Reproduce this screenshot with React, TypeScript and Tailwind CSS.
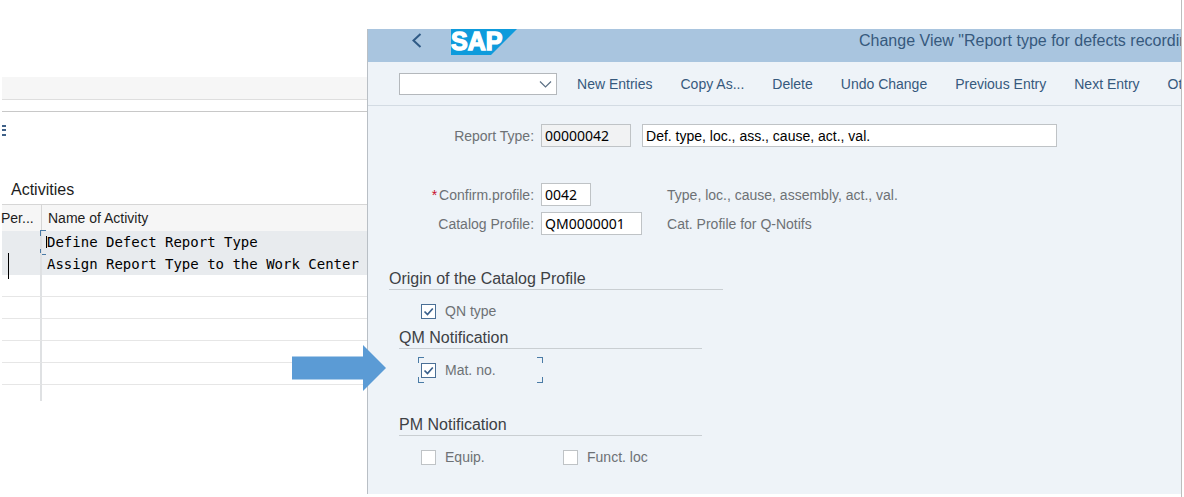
import { useState, type ReactNode } from 'react'

const ACTIONS = [
  'New Entries',
  'Copy As...',
  'Delete',
  'Undo Change',
  'Previous Entry',
  'Next Entry',
  'Other View',
]

const ACTIVITIES = [
  'Define Defect Report Type',
  'Assign Report Type to the Work Center',
]

const EMPTY_ROWS = [1, 2, 3, 4, 5]

const FIELD =
  "h-[23px] shrink-0 border border-[#bfc3c6] px-[3px] text-sm text-black outline-none"
const CODE = "font-['Noto_Sans','Open_Sans',sans-serif]"

function FocusCorners() {
  return (
    <>
      <span className="absolute left-0 top-0 size-[6px] border-l border-t border-[#4a7ba6]" />
      <span className="absolute bottom-0 left-0 size-[6px] border-b border-l border-[#4a7ba6]" />
    </>
  )
}

function SapLogo() {
  return (
    <svg width="66" height="26" viewBox="0 0 66 26" role="img" aria-label="SAP">
      <path d="M0 0H66L40 26H0Z" fill="#0e9bdc" />
      <text
        x="0"
        y="21"
        fill="#fff"
        stroke="#fff"
        strokeWidth="1.4"
        fontFamily="Liberation Sans, sans-serif"
        fontSize="25"
        fontWeight="700"
      >
        SAP
      </text>
    </svg>
  )
}

function Check({ label, initial = false }: { label: string; initial?: boolean }) {
  const [checked, setChecked] = useState(initial)

  return (
    <label className="flex h-[26px] items-center gap-[9px] text-sm text-[#6d7175]">
      <span className="relative size-[15px]">
        <input
          type="checkbox"
          checked={checked}
          onChange={e => setChecked(e.target.checked)}
          className="block size-[15px] appearance-none border border-[#bfc3c6] bg-white checked:border-[#4a6f96]"
        />
        {checked && (
          <svg
            className="pointer-events-none absolute inset-0"
            width="15"
            height="15"
            fill="none"
            stroke="#3a608c"
            strokeWidth="1.7"
          >
            <path d="M3.5 7.5L6.5 10.5L11.8 4.5" />
          </svg>
        )}
      </span>
      {label}
    </label>
  )
}

function SectionTitle({ children, wide = false }: { children: ReactNode; wide?: boolean }) {
  return (
    <h2
      className={`h-[23px] border-b border-[#c9ced2] text-base leading-6 text-[#3d4145] ${
        wide ? 'ml-[21px] w-[334px]' : 'ml-[31px] w-[303px]'
      }`}
    >
      {children}
    </h2>
  )
}

function ActivitiesPane() {
  return (
    <section className="w-[31%] shrink-0 overflow-hidden pl-[2px] pt-[77px]">
      <div className="h-[23px] border-b border-[#dedede] bg-[#f6f6f6]" />
      <div className="h-3 border-b border-[#c8c8c8]" />
      <svg className="mt-3 block" width="4" height="13" fill="#3f6188">
        <path d="M0 1h4v2H0zM0 5h4v2H0zM0 10h4v2H0z" />
      </svg>
      <h2 className="mt-[41px] h-[26px] pl-[9px] text-base leading-6 text-[#1d1d1d]">Activities</h2>
      <table className="w-full table-fixed border-separate border-spacing-0 text-left">
        <colgroup>
          <col className="w-[40px]" />
          <col />
        </colgroup>
        <thead>
          <tr className="h-[27px] bg-[#f6f6f6] text-sm text-[#1d1d1d]">
            <th className="whitespace-nowrap border-r border-t border-[#d6d6d6] p-0 font-normal">
              <span className="-ml-px">Per...</span>
            </th>
            <th className="border-t border-[#d6d6d6] p-0 pl-[6px] font-normal">Name of Activity</th>
          </tr>
        </thead>
        <tbody>
          {ACTIVITIES.map((name, i) => (
            <tr key={name} className="h-[22px] bg-[#e8ebee]">
              <td className="relative border-r-2 border-[#dfe1e3] p-0">
                {i === 1 && <span className="absolute left-[6px] top-0 h-[26px] w-px bg-black" />}
              </td>
              <td className="relative whitespace-nowrap p-0 pl-[5px] font-['DejaVu_Sans_Mono',monospace] text-sm leading-[22px] text-black">
                {i === 0 && (
                  <span className="absolute -left-[2px] -top-px h-[25px] w-[7px]">
                    <FocusCorners />
                    <span className="absolute right-0 top-[6px] h-3 w-px bg-black" />
                  </span>
                )}
                {name}
              </td>
            </tr>
          ))}
          {EMPTY_ROWS.map(n => (
            <tr key={n} className="h-[22px]">
              <td className="border-b border-r-2 border-b-[#e6e6e6] border-r-[#dfe1e3] p-0" />
              <td className="border-b border-[#e6e6e6] p-0" />
            </tr>
          ))}
          <tr className="h-4">
            <td className="border-r-2 border-[#dfe1e3] p-0" />
            <td className="p-0" />
          </tr>
        </tbody>
      </table>
    </section>
  )
}

export default function App() {
  return (
    <div className="flex min-h-screen overflow-hidden bg-white font-['Liberation_Sans',Arial,sans-serif]">
      <ActivitiesPane />

      <main className="relative mb-[3px] mt-[29px] min-w-0 flex-1 border-l border-[#b9bfc5] bg-[#eef3f8]">
        <header className="flex h-[33px] items-start overflow-hidden bg-[#a9c5df] pl-[43px]">
          <button type="button" aria-label="Back" className="h-[23px] w-[12px]">
            <svg width="12" height="23" fill="none" stroke="#2f5a85" strokeWidth="2">
              <path d="M9.500 5L2.500 11.500L9.500 18" />
            </svg>
          </button>
          <div className="ml-7">
            <SapLogo />
          </div>
          <h1 className="ml-auto w-[322px] whitespace-nowrap text-base leading-[23px] text-[#36597d]">
            Change View "Report type for defects recording"
          </h1>
        </header>

        <nav className="flex h-11 items-center overflow-hidden border-b border-[#d3dbe3] pl-[31px] text-sm text-[#36597d]">
          <span className="relative mr-5 shrink-0">
            <select
              aria-label="Command"
              className="block h-[22px] w-[158px] appearance-none border border-[#b4b8bc] bg-white"
            >
              <option></option>
            </select>
            <svg
              className="pointer-events-none absolute right-[5px] top-[7px]"
              width="13"
              height="9"
              fill="none"
              stroke="#5c7085"
              strokeWidth="1.2"
            >
              <path d="M1 1.500L6.500 7L12 1.500" />
            </svg>
          </span>
          <div className="flex gap-7 whitespace-nowrap">
            {ACTIONS.map(action => (
              <button key={action} type="button">
                {action}
              </button>
            ))}
          </div>
        </nav>

        <form className="pt-[18px] text-sm text-[#6d7175]">
          <div className="flex items-center">
            <label htmlFor="reportType" className="mr-[7px] w-[166px] shrink-0 text-right">
              Report Type:
            </label>
            <input
              id="reportType"
              readOnly
              defaultValue="00000042"
              className={`${FIELD} ${CODE} w-[90px] bg-[#f1f2f3]`}
            />
            <input
              aria-label="Report type description"
              defaultValue="Def. type, loc., ass., cause, act., val."
              className={`${FIELD} ml-[11px] w-[415px] bg-white`}
            />
          </div>

          <div className="mt-9 flex items-center">
            <label htmlFor="confirmProfile" className="mr-[7px] w-[166px] shrink-0 text-right">
              <span className="mr-[2px] text-[#c8102e]">*</span>Confirm.profile:
            </label>
            <span className="w-[126px] shrink-0">
              <input
                id="confirmProfile"
                defaultValue="0042"
                className={`${FIELD} ${CODE} block w-[50px] bg-white`}
              />
            </span>
            <span>Type, loc., cause, assembly, act., val.</span>
          </div>

          <div className="mt-[6px] flex items-center">
            <label htmlFor="catalogProfile" className="mr-[7px] w-[166px] shrink-0 text-right">
              Catalog Profile:
            </label>
            <span className="w-[126px] shrink-0">
              <input
                id="catalogProfile"
                defaultValue="QM0000001"
                className={`${FIELD} ${CODE} block w-[101px] bg-white`}
              />
            </span>
            <span>Cat. Profile for Q-Notifs</span>
          </div>

          <div className="mt-8">
            <SectionTitle wide>Origin of the Catalog Profile</SectionTitle>
            <div className="mt-2 pl-[53px]">
              <Check label="QN type" initial />
            </div>
          </div>

          <div className="mt-[2px]">
            <SectionTitle>QM Notification</SectionTitle>
            <div className="relative ml-[50px] mt-2 w-[125px] pl-[3px]">
              <FocusCorners />
              <span className="absolute right-0 top-0 size-[6px] border-r border-t border-[#4a7ba6]" />
              <span className="absolute bottom-0 right-0 size-[6px] border-b border-r border-[#4a7ba6]" />
              <Check label="Mat. no." initial />
              <svg
                className="absolute -left-[126px] -top-3"
                width="94"
                height="46"
                fill="#5b9bd5"
                aria-hidden="true"
              >
                <path d="M0 11.500H71V0L94 23L71 46V34.500H0Z" />
              </svg>
            </div>
          </div>

          <div className="mt-[30px] pb-[23px]">
            <SectionTitle>PM Notification</SectionTitle>
            <div className="mt-2 flex pl-[53px]">
              <div className="w-[142px]">
                <Check label="Equip." />
              </div>
              <Check label="Funct. loc" />
            </div>
          </div>
        </form>
      </main>

      <div className="w-[3px] shrink-0 border-l border-[#bdbdbd]" />
    </div>
  )
}
